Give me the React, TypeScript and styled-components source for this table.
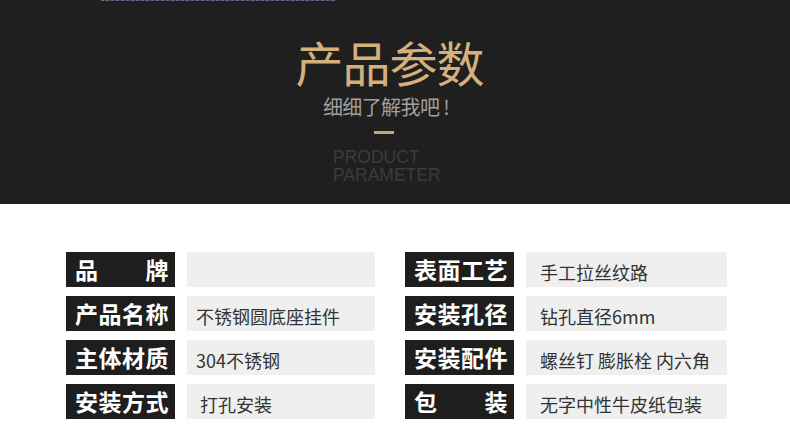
import React from 'react';
import styled, { createGlobalStyle } from 'styled-components';

const GlobalStyle = createGlobalStyle`
  html, body {
    margin: 0;
    padding: 0;
    background: #ffffff;
    font-family: "Noto Sans CJK SC", "Noto Sans", sans-serif;
  }
`;

const params: { label: string; value: string; spread?: boolean }[][] = [
  [
    { label: '品牌', value: '', spread: true },
    { label: '表面工艺', value: '手工拉丝纹路' },
  ],
  [
    { label: '产品名称', value: '不锈钢圆底座挂件' },
    { label: '安装孔径', value: '钻孔直径6mm' },
  ],
  [
    { label: '主体材质', value: '304不锈钢' },
    { label: '安装配件', value: '螺丝钉 膨胀栓 内六角' },
  ],
  [
    { label: '安装方式', value: '打孔安装' },
    { label: '包装', value: '无字中性牛皮纸包装', spread: true },
  ],
];

const App = () => {
  return (
    <>
      <GlobalStyle />
      <Page>
        <Header>
          <TopLine />
          <Title>产品参数</Title>
          <SubTitle>细细了解我吧 !</SubTitle>
          <GoldBar />
          <English>
            <EnLine>PRODUCT</EnLine>
            <EnLine>PARAMETER</EnLine>
          </English>
        </Header>

        <Table>
          {params.map((row, i) => (
            <React.Fragment key={i}>
              {row.map((item, j) => (
                <Pair key={item.label}>
                  <Label $spread={item.spread}>
                    {item.spread
                      ? item.label.split('').map((ch) => <span key={ch}>{ch}</span>)
                      : item.label}
                  </Label>
                  <Value $right={j === 1} $pad={i === 3 && j === 0 ? 13 : undefined}>
                    {item.value}
                  </Value>
                </Pair>
              ))}
            </React.Fragment>
          ))}
        </Table>
      </Page>
    </>
  );
};

export default App;

const Page = styled.div`
  width: 790px;
  height: 429px;
  overflow: hidden;
  background: #ffffff;
`;

const Header = styled.div`
  position: relative;
  height: 204px;
  background: #1f1f1f;
  display: flex;
  flex-direction: column;
  align-items: center;
  box-sizing: border-box;
  padding-top: 37px;
`;

const TopLine = styled.div`
  position: absolute;
  top: 0;
  left: 101px;
  width: 235px;
  height: 1px;
  background: repeating-linear-gradient(90deg, #5a6b82 0 3px, #3a4250 3px 5px);
`;

const Title = styled.div`
  font-size: 48px;
  line-height: 48px;
  color: #d4b07b;
  letter-spacing: -1px;
  margin-right: 11px;
`;

const SubTitle = styled.div`
  margin-top: 10px;
  font-size: 20px;
  line-height: 23px;
  color: #a0a0a0;
  letter-spacing: -0.6px;
  margin-right: 18px;
`;

const GoldBar = styled.div`
  width: 20px;
  height: 3px;
  background: #c9a66f;
  margin-top: 13px;
  margin-right: 22px;
`;

const English = styled.div`
  margin-top: 14px;
  width: 112px;
  margin-right: 12px;
  display: flex;
  flex-direction: column;
`;

const EnLine = styled.div`
  font-family: "Liberation Sans", Arial, sans-serif;
  font-size: 17.5px;
  line-height: 18px;
  height: 18px;
  color: #3c3c3c;
  text-align: left;
`;

const Table = styled.div`
  display: grid;
  grid-template-columns: 309px 322px;
  column-gap: 30px;
  row-gap: 9px;
  padding: 48px 0 0 66px;
`;

const Pair = styled.div`
  display: flex;
  gap: 12px;
  height: 35px;
`;

const Label = styled.div<{ $spread?: boolean }>`
  flex: 0 0 109px;
  box-sizing: border-box;
  background: #1e1e1e;
  color: #ffffff;
  font-size: 23px;
  font-weight: 700;
  line-height: 35px;
  padding: 0 6px 0 9px;
  display: flex;
  justify-content: ${(p) => (p.$spread ? 'space-between' : 'flex-start')};
  letter-spacing: 0.5px;
  white-space: nowrap;
`;

const Value = styled.div<{ $right?: boolean; $pad?: number }>`
  flex: 1;
  background: #efefef;
  color: #333333;
  font-size: 18px;
  line-height: 35px;
  padding-top: 3px;
  box-sizing: border-box;
  padding-left: ${(p) => (p.$pad ? p.$pad : p.$right ? 14 : 9)}px;
  white-space: nowrap;
`;
